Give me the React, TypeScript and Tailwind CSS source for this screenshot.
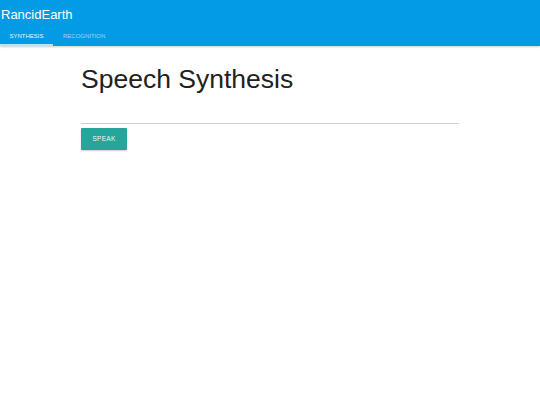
import { useState } from 'react';

const TABS = ['SYNTHESIS', 'RECOGNITION'];

export default function App() {
  const [tab, setTab] = useState(0);
  const [text, setText] = useState('');

  return (
    <div className="min-h-screen bg-white font-['Liberation_Sans',Arial,sans-serif] text-[#212121]">
      {/* App bar */}
      <header className="bg-[#039be5] text-white shadow-[0_1px_2px_rgba(0,0,0,0.2)]">
        <div className="h-[28px] flex items-center pl-px text-[13px] leading-none">RancidEarth</div>
        <nav className="flex h-[18px]">
          {TABS.map((t, i) => (
            <button
              key={t}
              type="button"
              onClick={() => setTab(i)}
              className={
                i === tab
                  ? 'px-[10px] w-[53px] flex items-center justify-center text-[6px] border-b-2 border-[#b3e5fc] text-white/95'
                  : 'px-[10px] flex items-center justify-center text-[6px] border-b-2 border-transparent text-white/60'
              }
            >
              {t}
            </button>
          ))}
        </nav>
      </header>

      {/* Content */}
      <main className="w-[378px] mx-auto">
        <h1 className="mt-[20px] text-[26.5px] leading-none font-normal">Speech Synthesis</h1>
        <input
          value={text}
          onChange={(e) => setText(e.target.value)}
          className="mt-[20px] block w-full h-[11px] border-b border-[#cfcfcf] outline-none text-[10px]"
        />
        <button
          type="button"
          className="mt-[4px] w-[46px] h-[22px] bg-[#26a69a] text-white/95 text-[6.5px] tracking-[0.3px] rounded-[1px] shadow-[0_1px_2px_rgba(0,0,0,0.2)]"
        >
          SPEAK
        </button>
      </main>
    </div>
  );
}
